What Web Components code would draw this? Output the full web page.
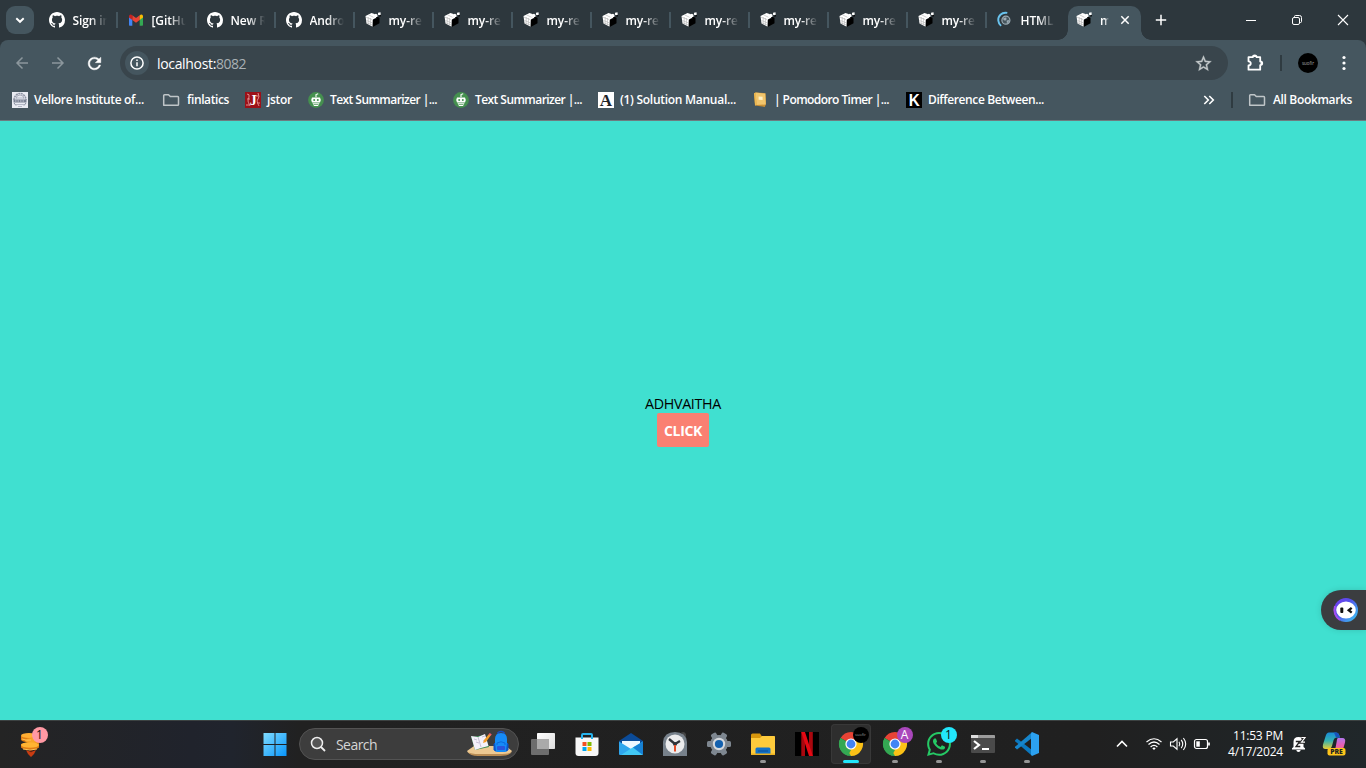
<!DOCTYPE html>
<html lang="en">
<head>
<meta charset="utf-8">
<title>my-react-app</title>
<style>
html,body{margin:0;height:100%;overflow:hidden;font-family:"Open Sans","Noto Sans",sans-serif}
</style>
</head>
<body>
<desktop-shell></desktop-shell>
<script>
const define = (name, html, setup) => customElements.define(name, class extends HTMLElement {
  connectedCallback() {
    if (this.shadowRoot) return;
    const t = document.createElement('template');
    t.innerHTML = typeof html === 'function' ? html(this) : html;
    this.attachShadow({mode: 'open'}).append(t.content.cloneNode(true));
    if (setup) setup(this);
  }
});

const ICONS = {
  github: [16, 16, '<path fill="#fff" d="M8 0C3.58 0 0 3.58 0 8c0 3.54 2.29 6.53 5.47 7.59.4.07.55-.17.55-.38 0-.19-.01-.82-.01-1.49-2.01.37-2.53-.49-2.69-.94-.09-.23-.48-.94-.82-1.13-.28-.15-.68-.52-.01-.53.63-.01 1.08.58 1.23.82.72 1.21 1.87.87 2.33.66.07-.52.28-.87.51-1.07-1.78-.2-3.64-.89-3.64-3.95 0-.87.31-1.59.82-2.15-.08-.2-.36-1.02.08-2.12 0 0 .67-.21 2.2.82.64-.18 1.32-.27 2-.27s1.36.09 2 .27c1.53-1.04 2.2-.82 2.2-.82.44 1.1.16 1.92.08 2.12.51.56.82 1.27.82 2.15 0 3.07-1.87 3.75-3.65 3.95.29.25.54.73.54 1.48 0 1.07-.01 1.93-.01 2.2 0 .21.15.46.55.38A8.01 8.01 0 0 0 16 8c0-4.42-3.58-8-8-8z"/>'],
  gmail: [16, 16, '<path fill="#4285f4" d="M1 4v8.700c0 .7.4 1.100 1 1.100h2.300V6.500L1 4z"/><path fill="#34a853" d="M15 4v8.700c0 .7-.4 1.100-1 1.100h-2.300V6.500L15 4z"/><path fill="#ea4335" d="M4.300 8V3.300L8 6.100l3.700-2.800V8L8 10.800z"/><path fill="#c5221f" d="M1 4.500v1L4.300 8V3.400L3.400 2.700C2.400 2 1 2.700 1 4.500z"/><path fill="#fbbc04" d="M15 4.500v1L11.700 8V3.400l.9-.7c1-.7 2.400 0 2.400 1.800z"/>'],
  cube: [16, 16, '<path fill="#fff" d="M.5 4 6.500 1l3 1v2.200l2.500 1-4 2.300-.3 7.300L1.500 11.500z"/><path fill="#000" d="m7.800 8 2-1.200 2-.2.200-1.800 2.500 1v5.400L7.700 15z"/><path fill="#fff" d="m8.800 2.600 2.200-.9 1.500 1v2l-1.700.8-2-1z"/><path d="m1 5.200 6.500 2.500M1.400 8.400l6 2.500m-6-.2 6 2.300M3.200 5v7.300M5.400 6v7.500M3.500 2.800l5 2.500" stroke="#aaa" stroke-width=".55" fill="none"/><path fill="#fff" d="m13 .7 2.500-.4.300 2.400-1.500.6-1.300-.6z"/><path fill="#000" d="m14.300 3.300 1.500-.6v1.600l-1.200.8zM11 5.500l1.500-.8v1.500H11z"/>'],
  htmlglobe: [16, 16, '<circle cx="8.900" cy="8.200" r="4" fill="#45555d" stroke="#9aaab3" stroke-width="1.200"/><path d="m6.200 6.300 3-1 .4 2-1.300 1.400-1.800-.6zM9.600 8.500l2.500-.5-.6 2.500-1.600.6z" fill="#9eacb5"/><path d="M10.300.9C4.500-.2.8 4.200 1.300 8.600c.2 2.200 1.200 3.900 2.800 5.300" fill="none" stroke="#69c3ee" stroke-width="1.900"/>'],
  down: [12, 12, '<path d="m2.300 4.200 3.700 3.600 3.700-3.600" fill="none" stroke="#fff" stroke-width="1.900"/>'],
  close: [12, 12, '<path d="m2.300 2.300 7.400 7.400m0-7.400-7.400 7.400" stroke="#fff" stroke-width="1.500"/>'],
  plus: [12, 12, '<path d="M6 .8v10.400M.8 6h10.400" stroke="#fff" stroke-width="1.500"/>'],
  min: [12, 12, '<path d="M1 6.500h10" stroke="#fff"/>'],
  max: [12, 12, '<path d="M3.500 3V2.500q0-1 1-1h4q2 0 2 2v4q0 1-1 1H9" fill="none" stroke="#fff"/><rect x="1.500" y="3.500" width="7" height="7" rx="1.500" fill="none" stroke="#fff"/>'],
  winclose: [12, 12, '<path d="m1 1 10 10m0-10L1 11" stroke="#fff" stroke-width="1.100"/>'],
  back: [14, 14, '<path d="M13 7H2m5.500-5.500L2 7l5.500 5.500" fill="none" stroke="#8c979d" stroke-width="1.500"/>'],
  forward: [14, 14, '<path d="M1 7h11M6.500 1.500 12 7l-5.500 5.500" fill="none" stroke="#8c979d" stroke-width="1.500"/>'],
  reload: [24, 24, '<path fill="#fff" stroke="#fff" stroke-width=".5" d="M17.650 6.350C16.200 4.900 14.210 4 12 4c-4.420 0-7.990 3.580-7.990 8s3.570 8 7.990 8c3.730 0 6.840-2.550 7.730-6h-2.080c-.82 2.330-3.040 4-5.650 4-3.310 0-6-2.690-6-6s2.690-6 6-6c1.660 0 3.140.69 4.220 1.780L13 11h7V4l-2.350 2.350z"/>'],
  info: [16, 16, '<circle cx="8" cy="8" r="6.100" fill="none" stroke="#fff" stroke-width="1.500"/><path d="M8 7.200v4.100M8 4.600v1.500" stroke="#fff" stroke-width="1.500"/>'],
  star: [24, 24, '<path fill="#c3c8ca" stroke="#c3c8ca" stroke-width=".4" d="m22 9.240-7.190-.62L12 2 9.190 8.630 2 9.240l5.460 4.730L5.820 21 12 17.270 18.180 21l-1.630-7.030L22 9.240zM12 15.400l-3.760 2.270 1-4.280-3.320-2.880 4.380-.38L12 6.100l1.710 4.040 4.380.38-3.320 2.880 1 4.280L12 15.400z"/>'],
  puzzle: [18, 18, '<path d="M2.500 3.200h4.300c0-2.500 3.800-2.500 3.800 0h3.600v4.200c2.700 0 2.700 3.700 0 3.700v4.600H2.500v-4.200c3-.3 3-3.900 0-4.200z" fill="none" stroke="#fff" stroke-width="1.800" stroke-linejoin="round"/><path d="M7 3c0-2.200 3.500-2.200 3.500 0zM14.500 7.500c2.300 0 2.300 3.500 0 3.500z" fill="#fff"/>'],
  dots: [4, 16, '<circle cx="2" cy="2.500" r="1.600" fill="#fff"/><circle cx="2" cy="8" r="1.600" fill="#fff"/><circle cx="2" cy="13.500" r="1.600" fill="#fff"/>'],
  folder: [18, 16, '<path d="M.7 13.200V3.500q0-.8.8-.8h4l1.800 1.900h7.400q.8 0 .8.800v7q0 .9-.8.900H1.500q-.8 0-.8-.1z" fill="none" stroke="#bfc5c8" stroke-width="1.500" stroke-linejoin="round"/>'],
  vellore: [16, 16, '<rect width="16" height="16" fill="#e8ebf2"/><path d="M2 8a6 6.500 0 0 1 12 0" fill="none" stroke="#8d93a3" stroke-width="1.500" stroke-dasharray="2 .6"/><path d="M4 7a4 4 0 0 1 8 0" fill="none" stroke="#aaaebc"/><path d="M1.500 7.500h13v3h-13z" fill="#777f91"/><path d="M3 9h10" stroke="#c8ccd8" stroke-dasharray="1.500 1"/><path d="M4 12.500h8M6 14.500h4M5 6h6" stroke="#b3b8c6"/><path d="m2 11 2 2.500m10-2.500-2 2.500" stroke="#858c9d"/>'],
  jstor: [16, 16, '<rect width="16" height="16" fill="#9c1018"/><path d="M2 2q3 0 2 3T3 9t2 5M13 1q2 4 0 6t1 7M2 7h3M11 4h3M12 11h3M1 13h3" fill="none" stroke="#df8a8a"/><text x="8.300" y="13" text-anchor="middle" font-family="Liberation Serif,serif" font-size="14" font-weight="700" fill="#fff">J</text>'],
  robot: [16, 16, '<circle cx="8" cy="8" r="7.900" fill="#45904f"/><path d="M8 5.200V2.600l2.200-.8" fill="none" stroke="#fff" stroke-width="1.100"/><path d="M4 5.500h8l.8 2.500-.8 2.600H4L3.200 8zM4.500 11.200h7l-1.500 2.700H6z" fill="#fff"/><circle cx="6.200" cy="8" r="1" fill="#45904f"/><circle cx="9.800" cy="8" r="1" fill="#45904f"/><path d="M5.500 12.500h5" stroke="#45904f" stroke-width=".7"/>'],
  solution: [16, 16, '<rect width="16" height="16" fill="#fff"/><text x="8" y="14" text-anchor="middle" font-family="Liberation Serif,serif" font-size="17" font-weight="700" fill="#1e2328">A</text>'],
  note: [16, 16, '<path d="m2 1.200 1.500-.8 10 .8.500 10.800-1.200 3-9.800-1.600z" fill="#c88e34"/><path d="m3.500.6 9.800.9.500 11-9.300.5z" fill="#f1c56c"/><path d="m6.600 4.500 4 .3v3.300l-4-.3z" fill="#fff1c6"/><path d="m2 1.200 1.700-.5 1 12.300-1.600.5z" fill="#edb952"/>'],
  keyk: [16, 16, '<rect width="16" height="16" fill="#000"/><text x="8.300" y="14" text-anchor="middle" font-family="Liberation Sans,sans-serif" font-size="17" font-weight="700" textLength="11" lengthAdjust="spacingAndGlyphs" fill="#fff">K</text>'],
  more: [12, 12, '<path d="m1.300 2 4 4-4 4m5-8 4 4-4 4" fill="none" stroke="#fff" stroke-width="1.600"/>'],
  face: [24, 24, '<defs><linearGradient id="f" x1="0" y1="0" x2="1" y2=".9"><stop offset="0" stop-color="#793bf2"/><stop offset=".4" stop-color="#544ee9"/><stop offset="1" stop-color="#38c7f2"/></linearGradient></defs><circle cx="12" cy="12" r="12" fill="url(#f)"/><path d="M1 8a12 12 0 0 0 5 14" fill="none" stroke="#a24ef0" stroke-width="2"/><ellipse cx="12" cy="12" rx="9.800" ry="8.600" fill="#fff"/><rect x="6.300" y="9.500" width="3" height="5.500" rx=".9" fill="#111"/><path d="m17.700 9.800-3 2.400 3 2.400" fill="none" stroke="#111" stroke-width="2.300"/>'],
  coins: [24, 26, '<g transform="translate(0,1)"><path fill="#c93c11" d="m6 18 5 2 5-2-2 4-3 3-3-3z"/><path fill="#6f210b" d="m8.500 17.500 2.500 3 2.500-3z"/><path fill="#df7d14" d="M1 4v4c2 2 5 2 7 2l-7 2v3.500c3 3.300 15 3 18 0V10l-5-3V4z"/><ellipse cx="9" cy="3.500" rx="8" ry="2.500" fill="#ffae33"/><ellipse cx="13" cy="8.500" rx="8" ry="2.600" fill="#f9a429"/><ellipse cx="10" cy="13" rx="9" ry="2.800" fill="#ffb432"/><path d="M2 7q5 2 9 1M3 17q7 2 14 0" fill="none" stroke="#ffc253"/></g>'],
  windows: [24, 24, '<defs><linearGradient id="w" x1="0" y1="0" x2="1" y2="1"><stop stop-color="#80dcff"/><stop offset="1" stop-color="#0895fb"/></linearGradient></defs><path fill="url(#w)" d="M.5 1h11v11H.500zM12.500 1h11v11h-11zM.500 13h11v11H.500zM12.500 13h11v11h-11z"/>'],
  search: [16, 16, '<circle cx="7" cy="7" r="5.500" fill="#555" stroke="#eee" stroke-width="1.500"/><path d="m11 11 4 4" stroke="#eee" stroke-width="1.800"/>'],
  desk: [46, 26, '<path d="m0 20 7-5h32l6 5q-1 4-12 4H11Q1 24 0 20z" fill="#edc992"/><path d="M1 21q2 4 10 4h22q9 0 12-4-3 2-13 2H12Q4 23 1 21z" fill="#ba8d54"/><path d="m4 6 14-2 4 12-14 3z" fill="#37884e"/><path d="m4 5 7 1 7-3 3.500 12-7.500 2-6 2z" fill="#f4f1fa"/><path d="m11 6 3 10m-7-8 3 1m5-3 3-1m-9 6 3 1m4-2 3-1" stroke="#c6bfd6" fill="none"/><path d="m17 9 5-6 2 1-5 7-3 1z" fill="#f39b2b"/><path d="m21.500 3.500 1.200-1.500 2 1.200-.9 1.500z" fill="#ee5965"/><path d="M31 4V1.500q3-2 6 0V4" fill="none" stroke="#194fc0" stroke-width="1.500"/><path d="M28 8q0-6 6-6t6 6v11q0 2-2 2h-8q-2 0-2-2z" fill="#168bf7"/><path d="M28 12l-1 1v6l2 1M40 12l1 1v6l-2 1" fill="#0b55c9" stroke="#0b55c9"/><path d="M30 14v-2q4-2.500 8 0v2" fill="none" stroke="#0b69dc"/><rect x="30" y="15" width="8" height="4" rx="1" fill="#2a55dc"/>'],
  taskview: [24, 24, '<defs><linearGradient id="t" x1="0" y1="0" x2="1" y2="1"><stop stop-color="#fff"/><stop offset="1" stop-color="#ddd"/></linearGradient></defs><rect x="6" y="1" width="18" height="16" rx=".8" fill="url(#t)"/><rect x="0" y="7" width="18" height="16" rx="1" fill="#767676" fill-opacity=".9"/><path d="M6 7h12v10H6z" fill="#aaa"/>'],
  store: [24, 24, '<path d="M7 6V3q0-1 1-1h8q1 0 1 1v3" fill="none" stroke="#27b3ed" stroke-width="2"/><path d="M.5 5.500h23V21q0 3-3 3h-17q-3 0-3-3z" fill="#f7f7f7"/><path d="M6 4h2v3H6zM16 4h2v3h-2z" fill="#27b3ed"/><path fill="#f25022" d="M7.500 10h4v4h-4z"/><path fill="#7fba00" d="M12.500 10h4v4h-4z"/><path fill="#00a4ef" d="M7.500 15h4v4h-4z"/><path fill="#ffb900" d="M12.500 15h4v4h-4z"/>'],
  mail: [24, 24, '<path d="M0 9 12 1l12 8v3H0z" fill="#0b4b98"/><path d="M3 9h18v5l-9 6-9-6z" fill="#eef7ff"/><path d="M0 9.500 12 17v6H1q-1 0-1-1z" fill="#2fa6ed"/><path d="m24 9.500-12 7L2 23h21q1 0 1-1z" fill="#42c8f5"/><path d="m24 9.500-10 6 9.500 7.200q.5-.3.5-.7z" fill="#1681d5"/>'],
  clock: [24, 24, '<path d="m18 .5 3-.5 2 2v4z" fill="#444"/><path d="M0 24V10Q1 0 12 0t12 10v14z" fill="#77818b"/><circle cx="12" cy="12" r="9.500" fill="#ececed"/><path d="m6 7 6 5 5-3" fill="none" stroke="#2f3439" stroke-width="2.300"/><circle cx="12" cy="12" r="2" fill="#2f3439"/><path d="M12 13v6.500" stroke="#e54d27" stroke-width="2"/>'],
  gear: [24, 24, '<g fill="#7e8790" transform="rotate(30 12 12)"><circle cx="12" cy="12" r="9"/><rect x="9" y="0" width="6" height="24" rx="1.500"/><rect x="9" y="0" width="6" height="24" rx="1.500" transform="rotate(60 12 12)"/><rect x="9" y="0" width="6" height="24" rx="1.500" transform="rotate(120 12 12)"/></g><circle cx="12" cy="12" r="6.200" fill="#d5d9dd"/><circle cx="12" cy="12" r="4.100" fill="#1260ae"/>'],
  explorer: [24, 24, '<path d="M0 3q0-1.500 1.500-1.500H9l2 3H24V10H0z" fill="#d8970d"/><path d="M0 6h9l2-2h12q1 0 1 1v18H0z" fill="#fecb3c"/><path d="M4.500 22v-5q0-1.500 1.500-1.500h12q1.500 0 1.500 1.500v5z" fill="#1273c9"/><path d="M7 18.500h10v1H7z" fill="#0b4f98"/><path d="M0 21.500h24V23H0z" fill="#edb222"/>'],
  netflix: [24, 24, '<path d="M0 0h24v24H0z" fill="#000"/><path d="M6.300 0H10v24H6.300zM14 0h3.800v24H14z" fill="#a9070e"/><path d="M6.300 0H10l7.800 24H14z" fill="#e50914"/>'],
  chrome: [24, 24, '<path d="M12 12 1.600 6A12 12 0 0 1 22.400 6z" fill="#e74335"/><path d="M12 12 22.400 6A12 12 0 0 1 12 24z" fill="#fbc116"/><path d="M12 12v12A12 12 0 0 1 1.600 6z" fill="#34a853"/><path d="m6.800 15 5.200-3 5.200 3L12 24z" fill="#fbc116"/><path d="M1.600 6 6.800 15 12 18l-3 5.600A12 12 0 0 1 1.600 6z" fill="#34a853"/><path d="M12 6.500h10.700" stroke="#e74335" stroke-width="1"/><circle cx="12" cy="12" r="5.600" fill="#fff"/><circle cx="12" cy="12" r="4.400" fill="#4384f4"/>'],
  whatsapp: [24, 24, '<path fill="#25c965" d="M17.472 14.382c-.297-.149-1.758-.867-2.030-.967-.273-.099-.471-.148-.67.150-.197.297-.767.966-.94 1.164-.173.199-.347.223-.644.075-.297-.15-1.255-.463-2.390-1.475-.883-.788-1.480-1.761-1.653-2.059-.173-.297-.018-.458.130-.606.134-.133.298-.347.446-.52.149-.174.198-.298.298-.497.099-.198.050-.371-.025-.52-.075-.149-.669-1.612-.916-2.207-.242-.579-.487-.5-.669-.51-.173-.008-.371-.010-.57-.010-.198 0-.52.074-.792.372-.272.297-1.040 1.016-1.040 2.479 0 1.462 1.065 2.875 1.213 3.074.149.198 2.096 3.200 5.077 4.487.709.306 1.262.489 1.694.625.712.227 1.360.195 1.871.118.571-.085 1.758-.719 2.006-1.413.248-.694.248-1.289.173-1.413-.074-.124-.272-.198-.57-.347m-5.421 7.403h-.004a9.870 9.870 0 0 1-5.031-1.378l-.361-.214-3.741.982.998-3.648-.235-.374a9.860 9.860 0 0 1-1.510-5.260c.001-5.450 4.436-9.884 9.888-9.884 2.640 0 5.122 1.030 6.988 2.898a9.825 9.825 0 0 1 2.893 6.994c-.003 5.450-4.437 9.884-9.885 9.884m8.413-18.297A11.815 11.815 0 0 0 12.050 0C5.495 0 .160 5.335.157 11.892c0 2.096.547 4.142 1.588 5.945L.057 24l6.305-1.654a11.882 11.882 0 0 0 5.683 1.448h.005c6.554 0 11.890-5.335 11.893-11.893a11.821 11.821 0 0 0-3.480-8.413z"/>'],
  terminal: [24, 24, '<rect y="3" width="24" height="18" rx="1" fill="#4a4a4a"/><path d="M0 6V4q0-1 1-1h22q1 0 1 1v2z" fill="#9c9c9c"/><path d="M0 3h7v3H0z" fill="#ddd"/><path d="m3 9 5 4-5 4" fill="none" stroke="#fff" stroke-width="2.200"/><path d="M11 17h7" stroke="#fff" stroke-width="2"/>'],
  vscode: [24, 24, '<path d="m0 8.400 2-1.800L17 18v5.800L0 9.200z" fill="#0b78bf"/><path d="m0 15.600 2 1.800L17 6V.2L0 14.800z" fill="#1685cb"/><path d="m17 0 7 3v18l-7 3-1-1.500V1.500z" fill="#2ca1f0"/>'],
  chevup: [14, 10, '<path d="m2 7.500 5-5 5 5" fill="none" stroke="#fff" stroke-width="1.600"/>'],
  wifi: [18, 16, '<g fill="none" stroke="#fff" stroke-width="1.200"><path d="M1.500 6q7.500-6.500 15 0M3.500 8.500q5.500-5 11 0M5.600 11q3.400-3.200 6.800 0"/></g><path d="M7.300 12.300q1.700-1.500 3.400 0L9 14z" fill="#fff"/>'],
  volume: [18, 16, '<g fill="none" stroke="#fff" stroke-width="1.100"><path d="M1.500 6v4h2.800L8 13.200V2.800L4.300 6z"/><path d="M10 5.800q1.600 2.200 0 4.400M12.200 3.900q3.100 4.100 0 8.200M14.400 2q4.600 6 0 12"/></g>'],
  battery: [18, 16, '<rect x="1.500" y="3.500" width="13" height="9" rx="2" fill="none" stroke="#fff" stroke-width="1.200"/><path d="M3.300 5.300h3.500v5.400H3.300z" fill="#fff"/><path d="M16 6.500v3" stroke="#fff" stroke-width="1.700"/>'],
  bell: [16, 18, '<path d="M2.500 12V7q0-5 5-5t5 5v5l1.500 1.300v1.200H1v-1.200z" fill="#fff"/><path d="M5.300 15h4.400q-.3 2-2.200 2t-2.200-2z" fill="#fff"/><path d="M4.800 6.500h4L5 11.500h4.300" stroke="#222" stroke-width="1.300" fill="none"/><path d="M10.300 2.500H14l-3.500 4.700H14" stroke="#222" stroke-width="3" fill="none"/><path d="M10.300 2.500H14l-3.500 4.700H14" stroke="#fff" stroke-width="1.200" fill="none"/>'],
  copilot: [26, 26, '<defs><linearGradient id="c1" x1="0" y1="0" x2="0" y2="1"><stop stop-color="#188bd9"/><stop offset=".5" stop-color="#34b2b0"/><stop offset="1" stop-color="#e8ce35"/></linearGradient><linearGradient id="c2" x1="0" y1="0" x2="0" y2="1"><stop stop-color="#b176ec"/><stop offset=".5" stop-color="#e95eb0"/><stop offset="1" stop-color="#f58560"/></linearGradient></defs><path d="M8 1.500h7q2.500 0 3.300 3l.7 2h-3.500q-2.200 0-2.900 2.500L11 15q-.8 3-3 3H4.500Q1 18 2 13.500l2.500-8Q5.500 1.500 8 1.500z" fill="url(#c1)"/><path d="M13 1.500h2q2.500 0 3.300 3l.7 2h-4z" fill="#1852bd"/><path d="M17 7h4.500q3.500 0 2.500 4.500l-2 7q-1 3.500-4 3.500h-6.500q2-.5 2.700-3.500l1.500-8Q16 7 17 7z" fill="url(#c2)"/><rect x="6.500" y="17" width="18" height="7.500" rx="2" fill="#ffc51b"/><text x="15.500" y="23.300" text-anchor="middle" font-family="Open Sans,sans-serif" font-size="6.800" font-weight="800" fill="#222">PRE</text>']
};

define('ui-icon', el => {
  const [w, h, body] = ICONS[el.getAttribute('name')];
  const width = +(el.getAttribute('size') || w), height = width * h / w;
  return `<style>:host{display:block;flex:none;width:${width}px;height:${height}px}svg{display:block;width:100%;height:100%;overflow:visible}</style><svg viewBox="0 0 ${w} ${h}">${body}</svg>`;
});

/* Text whose tracking is adjusted so that it spans the given width. */
define('ui-label', el => `<style>:host{display:block;flex:none;white-space:nowrap;width:${el.getAttribute('width')}px}span{display:inline-block}</style><span><slot></slot></span>`, el => {
  const s = el.shadowRoot.querySelector('span');
  const fit = +(el.getAttribute('fit') || el.getAttribute('width'));
  s.style.letterSpacing = (fit - s.getBoundingClientRect().width) / el.textContent.length + 'px';
});

define('browser-tab', el => `<style>
:host{display:flex;align-items:center;flex:none;box-sizing:border-box;width:79px;height:40px;padding-left:9.500px;color:#fff;font-size:12px;letter-spacing:-.1px;font-weight:600;position:relative}
:host::after{content:"";position:absolute;right:0;top:12px;width:2px;height:16px;background:#45565f}
:host([last])::after{display:none}
.t{margin-left:8px;width:34px;overflow:hidden;white-space:nowrap;-webkit-mask-image:linear-gradient(90deg,#000 50%,transparent);mask-image:linear-gradient(90deg,#000 50%,transparent)}
:host([active]){width:73px;height:34px;margin:6px 0 0 2px;padding:0 0 6px 8px;background:#45565f;border-radius:10px 10px 0 0}
:host([active])::after{right:-10px;top:24px;width:10px;height:10px;background:radial-gradient(circle at 100% 0,transparent 9.500px,#45565f 10px)}
:host([active])::before{content:"";position:absolute;left:-10px;top:24px;width:10px;height:10px;background:radial-gradient(circle at 0 0,transparent 9.500px,#45565f 10px)}
:host([active]) .t{width:9px}
.x{display:none;margin-left:10px}:host([active]) .x{display:block}
</style><ui-icon name="${el.getAttribute('icon')}" size="16"></ui-icon><div class="t"><slot></slot></div><ui-icon class="x" name="close" size="12"></ui-icon>`);

define('tab-strip', `<style>
:host{display:flex;height:40px;background:#2d373d}
.menu{flex:none;width:28px;height:28px;margin:6px 5px 0 6px;border-radius:9px;background:#45565f;display:grid;place-items:center}
.plus{margin:14px 0 0 14px}
.win{display:flex;margin-left:auto;padding:14px 17px 0 0;gap:34px}
</style><div class="menu"><ui-icon name="down" size="12"></ui-icon></div>
<browser-tab icon="github">Sign in</browser-tab><browser-tab icon="gmail">[GitHub</browser-tab><browser-tab icon="github">New R</browser-tab><browser-tab icon="github">Andro</browser-tab>
${'<browser-tab icon="cube">my-re</browser-tab>'.repeat(8)}
<browser-tab icon="htmlglobe" last>HTML</browser-tab><browser-tab icon="cube" active>my</browser-tab>
<ui-icon class="plus" name="plus" size="12"></ui-icon>
<div class="win"><ui-icon name="min"></ui-icon><ui-icon name="max"></ui-icon><ui-icon name="winclose"></ui-icon></div>`);

define('address-bar', `<style>
:host{display:flex;align-items:center;box-sizing:border-box;height:46px;padding:0 17px 0 12.500px;color:#fff}
.nav{display:flex;align-items:center;width:107.500px;flex:none}
.nav>div{width:36px;display:grid;place-items:center;margin-left:-8px;margin-right:8px}
.box{flex:none;width:1108px;height:34px;box-sizing:border-box;border-radius:17px;background:#39454c;display:flex;align-items:center;padding:0 15px 0 5px}
.chip{width:24px;height:24px;border-radius:50%;background:#45565f;display:grid;place-items:center;margin-right:8px}
.url{display:flex;font-size:14px}.port{color:#aab1b5}
.star{margin-left:auto}
.pz{margin-left:17.500px}.sep{width:2px;height:16px;background:#2f3b41;margin-left:16px}
.av{width:20px;height:20px;border-radius:50%;background:#000;display:grid;place-items:center;margin-left:16.500px;font-size:4.500px;line-height:6px;color:#aaa}
.dots{margin-left:auto;margin-right:3px}
</style><div class="nav"><div><ui-icon name="back"></ui-icon></div><div><ui-icon name="forward"></ui-icon></div><div><ui-icon name="reload" size="19"></ui-icon></div></div>
<div class="box"><div class="chip"><ui-icon name="info"></ui-icon></div><div class="url"><ui-label width="59">localhost:</ui-label><ui-label class="port" width="30">8082</ui-label></div><ui-icon class="star" name="star" size="19"></ui-icon></div>
<ui-icon class="pz" name="puzzle"></ui-icon><div class="sep"></div><div class="av">suofir</div><ui-icon class="dots" name="dots"></ui-icon>`);

define('bookmark-item', el => `<style>:host{display:flex;align-items:center;gap:6px;flex:none;line-height:16px}slot{display:block;margin-top:-1px}</style><ui-icon name="${el.getAttribute('icon')}"></ui-icon><slot></slot>`);

define('bookmarks-bar', `<style>
:host{display:flex;align-items:center;gap:16px;box-sizing:border-box;height:35px;padding:0 14px 7px 12px;color:#fff;font-size:12px;font-weight:600}
.more{margin-left:auto}.sep{width:2px;height:16px;background:#2f3b41}
</style>
<bookmark-item icon="vellore"><ui-label width="113" fit="110">Vellore Institute of...</ui-label></bookmark-item>
<bookmark-item icon="folder"><ui-label width="42">finlatics</ui-label></bookmark-item>
<bookmark-item icon="jstor"><ui-label width="25">jstor</ui-label></bookmark-item>
<bookmark-item icon="robot"><ui-label width="107">Text Summarizer |...</ui-label></bookmark-item>
<bookmark-item icon="robot"><ui-label width="107">Text Summarizer |...</ui-label></bookmark-item>
<bookmark-item icon="solution"><ui-label width="116">(1) Solution Manual...</ui-label></bookmark-item>
<bookmark-item icon="note"><ui-label width="116" fit="115">| Pomodoro Timer |...</ui-label></bookmark-item>
<bookmark-item icon="keyk"><ui-label width="116">Difference Between...</ui-label></bookmark-item>
<ui-icon class="more" name="more"></ui-icon><div class="sep"></div>
<bookmark-item icon="folder"><ui-label width="79">All Bookmarks</ui-label></bookmark-item>`);

define('browser-chrome', `<style>
:host{display:block;height:121px;background:#2d373d}
.tools{height:80px;background:#45565f;border-bottom:1px solid #6d7c80;border-radius:8px 8px 0 0}
address-bar{display:flex}
</style><tab-strip></tab-strip><div class="tools"><address-bar></address-bar><bookmarks-bar></bookmarks-bar></div>`);

define('click-button', `<style>:host{display:block}button{display:grid;place-items:center;width:52px;height:34.500px;padding:1px 0 0;box-sizing:border-box;border:0;border-radius:2px;background:#fa8072;color:#fff;font:700 14px "Open Sans",sans-serif}</style><button><slot></slot></button>`);

define('assistant-tab', `<style>:host{position:absolute;right:0;top:469px;width:45px;height:40px;box-sizing:border-box;border-radius:20px 0 0 20px;background:#3b3d40;padding:8px 0 0 13px;box-shadow:0 0 6px #0002}</style><ui-icon name="face"></ui-icon>`);

define('app-page', `<style>:host{display:flex;flex-direction:column;align-items:center;justify-content:center;position:relative;background:#40e0d0;color:#000;font-size:14.300px;line-height:20px}
.name{height:19px}</style>
<ui-label class="name" width="76">ADHVAITHA</ui-label><click-button><ui-label width="38">CLICK</ui-label></click-button><assistant-tab></assistant-tab>`);

define('task-item', el => `<style>
:host{display:grid;place-items:center;flex:none;width:44px;height:48px;position:relative}
:host([active])::before{content:"";position:absolute;inset:4px 2px;border-radius:4px;background:#2e2e2e;box-shadow:inset 0 0 0 1px #383838}
:host([open])::after{content:"";position:absolute;left:19px;bottom:5px;width:6px;height:3px;border-radius:2px;background:#959595}
:host([active])::after{left:14px;width:16px;background:#22e6fb}
ui-icon{position:relative}
.b{position:absolute;left:23.500px;top:7px;width:16px;height:16px;border-radius:50%;display:grid;place-items:center;font-size:12px;line-height:16px;background:var(--badge);color:var(--ink)}
.b.tiny{font-size:4px;color:#999}
</style><ui-icon name="${el.getAttribute('icon')}"></ui-icon>${el.hasAttribute('badge') ? `<div class="b ${el.getAttribute('badge').length > 1 ? 'tiny' : ''}">${el.getAttribute('badge')}</div>` : ''}`);

define('search-pill', `<style>:host{display:flex;align-items:center;flex:none;box-sizing:border-box;width:220px;height:32px;border:1px solid #535353;border-radius:16px;background:#3d3d3d;color:#d5d5d5;font-size:14px;padding:0 5px 0 10px}ui-label{margin-left:10px}.d{margin-left:auto}</style><ui-icon name="search"></ui-icon><ui-label width="41">Search</ui-label><ui-icon class="d" name="desk"></ui-icon>`);

define('system-tray', `<style>
:host{display:flex;align-items:center;margin-left:auto;padding-right:19px;color:#fff;font-size:12px;line-height:16px}
.net{display:flex;gap:6px;margin:0 16px 0 16px}
.clock{display:flex;flex-direction:column;align-items:flex-end;width:56px;margin-right:8px}
.cop{margin-left:14px}
</style><ui-icon name="chevup"></ui-icon><div class="net"><ui-icon name="wifi"></ui-icon><ui-icon name="volume"></ui-icon><ui-icon name="battery"></ui-icon></div>
<div class="clock"><ui-label width="50">11:53 PM</ui-label><ui-label width="55">4/17/2024</ui-label></div><ui-icon name="bell"></ui-icon><ui-icon class="cop" name="copilot"></ui-icon>`);

define('task-bar', `<style>
:host{display:flex;align-items:center;box-sizing:border-box;height:48px;background:linear-gradient(90deg,#242424,#20232c 14%,#20242d 17%,#212121 22%,#202020 80%,#20272a);box-shadow:inset 0 1px #3c4242}
.weather{margin-left:8px;padding-left:3px;width:41px}.start{margin-left:199px;width:48px;display:grid;place-items:center}
</style>
<task-item class="weather" icon="coins" badge="1" style="--badge:#ff99a4;--ink:#111"></task-item>
<div class="start"><ui-icon name="windows"></ui-icon></div><search-pill></search-pill><task-item icon="taskview" style="margin-left:2px"></task-item>
<task-item icon="store"></task-item><task-item icon="mail"></task-item><task-item icon="clock"></task-item><task-item icon="gear"></task-item><task-item icon="explorer" open></task-item><task-item icon="netflix"></task-item>
<task-item icon="chrome" open active badge="suofir" style="--badge:#000"></task-item><task-item icon="chrome" open badge="A" style="--badge:#aa47bc;--ink:#fff"></task-item>
<task-item icon="whatsapp" open badge="1" style="--badge:#22e6fb;--ink:#111"></task-item><task-item icon="terminal" open></task-item><task-item icon="vscode" open></task-item>
<system-tray></system-tray>`);

define('desktop-shell', `<style>:host{display:grid;grid-template-rows:121px 1fr 48px;width:1366px;height:768px;overflow:hidden}</style><browser-chrome></browser-chrome><app-page></app-page><task-bar></task-bar>`);
</script>
</body>
</html>
